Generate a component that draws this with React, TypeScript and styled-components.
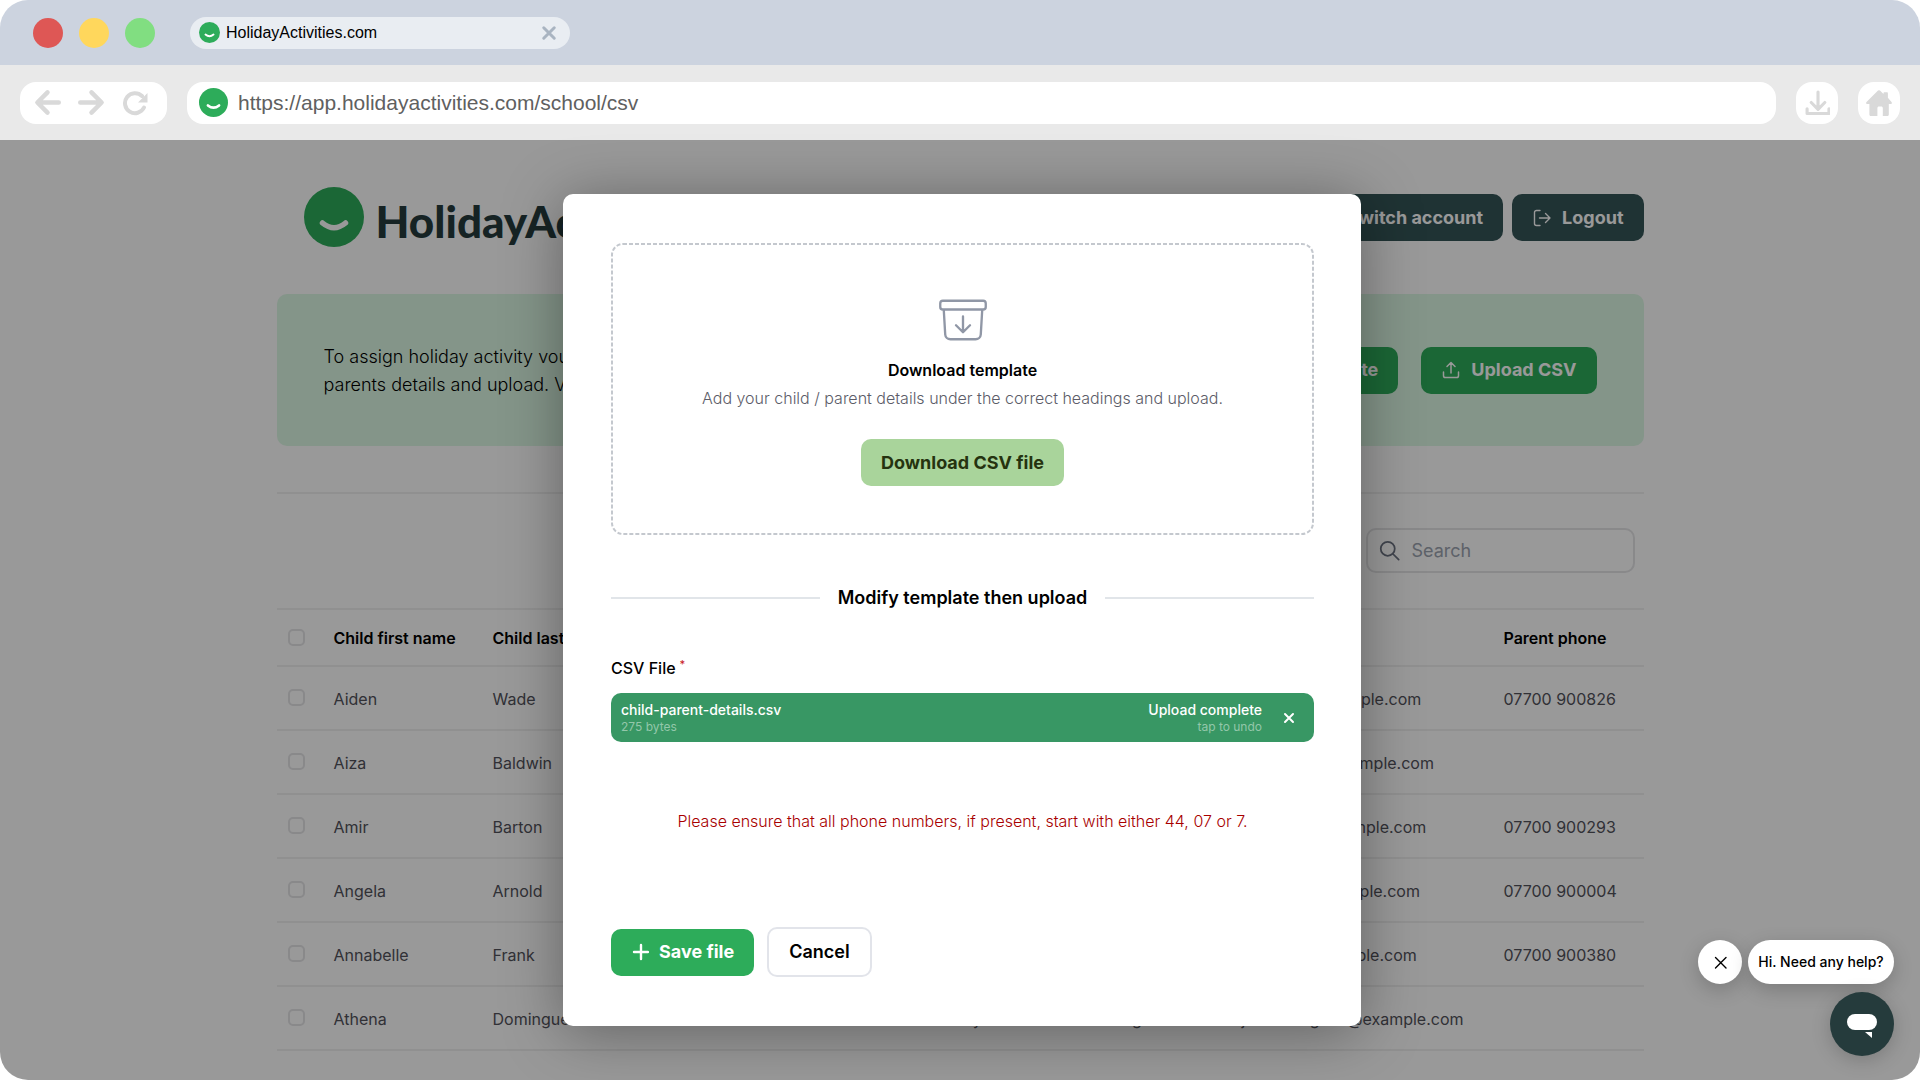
import React from "react";
import styled, { createGlobalStyle, css } from "styled-components";

const GlobalStyle = createGlobalStyle`
  *, *::before, *::after { box-sizing: border-box; }
  body { margin: 0; background: #ffffff; font-family: Inter, "Noto Sans", sans-serif; color: #000000; }
  button, input { font: inherit; color: inherit; }
  button { border: 0; padding: 0; background: none; cursor: pointer; }
`;

/* ---------- browser frame ---------- */

const BrowserWindow = styled.div`
  display: flex;
  flex-direction: column;
  min-height: 100vh;
  border-radius: 28px;
  overflow: hidden;
`;

const TitleBar = styled.div`
  display: flex;
  align-items: center;
  height: 65px;
  padding: 0 33px;
  gap: 35px;
  background: #ccd3df;
`;

const TrafficLights = styled.div`
  display: flex;
  gap: 16px;
`;

const Light = styled.button<{ $color: string }>`
  width: 30px;
  height: 30px;
  border-radius: 50%;
  background: ${(p) => p.$color};
`;

const Tab = styled.div`
  display: flex;
  align-items: center;
  gap: 6px;
  width: 380px;
  height: 32px;
  padding: 0 12px 0 9px;
  border-radius: 16px;
  background: #e9edf2;
  font: 16px/20px "Liberation Sans", Arial, sans-serif;
`;

const TabTitle = styled.span`
  flex: 1;
`;

const TabClose = styled.button`
  display: flex;
  color: #a9b4c1;
`;

const Toolbar = styled.div`
  display: flex;
  align-items: center;
  gap: 20px;
  height: 75px;
  padding: 0 20px;
  background: #e9e9e9;
`;

const ToolGroup = styled.div`
  display: flex;
  align-items: center;
  gap: 17px;
  height: 42px;
  padding: 0 19px 0 14px;
  border-radius: 16px;
  background: #ffffff;
`;

const ToolButton = styled.button<{ $boxed?: boolean }>`
  display: flex;
  align-items: center;
  justify-content: center;
  color: #d9d9d9;
  ${(p) =>
    p.$boxed &&
    css`
      width: 42px;
      height: 42px;
      border-radius: 16px;
      background: #ffffff;
    `}
`;

const AddressBar = styled.div`
  display: flex;
  flex: 1;
  align-items: center;
  gap: 10px;
  height: 42px;
  padding: 0 12px;
  border-radius: 16px;
  background: #ffffff;
`;

const AddressInput = styled.input`
  flex: 1;
  border: 0;
  padding: 0;
  outline: 0;
  background: none;
  color: #606060;
  font: 21px/24px "Liberation Sans", Arial, sans-serif;
`;

/* ---------- page ---------- */

const Viewport = styled.div`
  position: relative;
  display: flex;
  flex: 1;
  flex-direction: column;
  background: #ffffff;
`;

const Page = styled.div`
  width: 100%;
  max-width: 1367px;
  margin: 0 auto;
  padding-top: 47px;
`;

const Header = styled.header`
  display: flex;
  align-items: flex-start;
  justify-content: space-between;
  padding-left: 27px;
  margin-bottom: 47px;
`;

const Brand = styled.a`
  display: flex;
  align-items: center;
  gap: 12px;
  height: 60px;
  color: #253b3d;
  font: 900 44px/56px Lato, sans-serif;
  text-decoration: none;
`;

const BrandName = styled.span`
  padding-top: 8px;
`;

const Row = styled.div<{ $gap: number; $top?: number }>`
  display: flex;
  align-items: center;
  gap: ${(p) => p.$gap}px;
  padding-top: ${(p) => p.$top ?? 0}px;
`;

const tones = {
  dark: css`
    background: #355558;
    color: #ffffff;
  `,
  green: css`
    background: #2dac5a;
    color: #ffffff;
  `,
  lime: css`
    background: #a9d49b;
    color: #25330f;
  `,
  outline: css`
    height: 50px;
    border: 2px solid #e2e4ea;
    background: #ffffff;
    font-weight: 600;
  `,
};

const Button = styled.button<{ $tone: keyof typeof tones }>`
  display: inline-flex;
  align-items: center;
  justify-content: center;
  gap: 10px;
  height: 47px;
  padding: 0 20px;
  border-radius: 10px;
  font-size: 18px;
  font-weight: 700;
  line-height: 24px;
  white-space: nowrap;
  ${(p) => tones[p.$tone]}
`;

const Banner = styled.section`
  display: flex;
  align-items: center;
  justify-content: space-between;
  height: 152px;
  padding: 0 47px;
  border-radius: 10px;
  background: #ddf8e5;
`;

const BannerText = styled.p`
  max-width: 500px;
  margin: 0;
  padding-top: 2px;
  font-size: 18px;
  font-weight: 300;
  line-height: 28px;
`;

const FilterBar = styled.div`
  display: flex;
  justify-content: flex-end;
  align-items: center;
  height: 116px;
  margin-top: 46px;
  padding: 0 9px 2px 0;
  border-top: 2px solid #f0f0f0;
`;

const SearchBox = styled.label`
  display: flex;
  align-items: center;
  gap: 12px;
  width: 269px;
  height: 45px;
  padding: 0 11px;
  border: 2px solid #e4e4e7;
  border-radius: 10px;
  color: #6b7280;
`;

const SearchInput = styled.input`
  flex: 1;
  min-width: 0;
  border: 0;
  padding: 2px 0 0;
  outline: 0;
  background: none;
  font-size: 18px;
  line-height: 24px;
  &::placeholder { color: #9ca3af; opacity: 1; }
`;

const Table = styled.table`
  width: 100%;
  table-layout: fixed;
  border-collapse: collapse;
  border-top: 2px solid #f0f0f0;
  font-size: 16px;
  line-height: 24px;
  text-align: left;
`;

const Col = styled.col<{ $w?: string }>`
  width: ${(p) => p.$w ?? "auto"};
`;

const Tr = styled.tr`
  height: 64px;
  border-bottom: 2px solid #f0f0f0;
  thead & { height: 57px; }
`;

const Th = styled.th`
  padding: 0;
  font-weight: 600;
  white-space: nowrap;
`;

const Td = styled.td`
  padding: 2px 0 0;
  color: #52525b;
  &:first-child { padding: 0 0 2px; }
`;

const Check = styled.input`
  display: block;
  appearance: none;
  width: 17px;
  height: 17px;
  margin: 0 0 0 11px;
  border: 2px solid #e4e4e7;
  border-radius: 5px;
`;

/* ---------- modal ---------- */

const Overlay = styled.div`
  position: absolute;
  inset: 0;
  display: flex;
  align-items: flex-start;
  justify-content: center;
  padding: 54px 0 54px 4px;
  background: rgba(0, 0, 0, 0.4);
`;

const Modal = styled.form`
  display: flex;
  flex-direction: column;
  width: 798px;
  max-width: 100%;
  height: 100%;
  padding: 49px 47px 49px 48px;
  border-radius: 10px;
  background: #ffffff;
  box-shadow: 0 6px 60px rgba(0, 0, 0, 0.36);
`;

const TemplateBox = styled.section`
  position: relative;
  display: flex;
  flex-direction: column;
  align-items: center;
  padding: 49px 0;
`;

const DashedOutline = styled.svg`
  position: absolute;
  inset: 0;
  width: 100%;
  height: 100%;
  pointer-events: none;
  rect {
    width: calc(100% - 2px);
    height: calc(100% - 2px);
  }
`;

const BoxTitle = styled.h2`
  margin: 10px 0 4px;
  font-size: 16px;
  font-weight: 600;
  line-height: 24px;
`;

const BoxText = styled.p`
  margin: 0 0 29px;
  color: #5c5c68;
  font-size: 16px;
  font-weight: 300;
  line-height: 24px;
`;

const Divider = styled.div`
  display: flex;
  align-items: center;
  gap: 18px;
  margin: 51px 0 46px;
  font-size: 18px;
  font-weight: 600;
  line-height: 24px;
  &::before, &::after {
    content: "";
    flex: 1;
    height: 2px;
    background: #e1e5e9;
  }
`;

const FieldLabel = styled.label`
  display: flex;
  gap: 4px;
  margin-bottom: 13px;
  font-size: 16px;
  font-weight: 500;
  line-height: 24px;
`;

const Required = styled.span`
  color: #c81e1e;
  font-size: 11px;
  line-height: 16px;
`;

const HiddenFile = styled.input`
  position: absolute;
  width: 1px;
  height: 1px;
  opacity: 0;
`;

const UploadedFile = styled.div`
  display: flex;
  flex-shrink: 0;
  align-items: center;
  height: 49px;
  padding: 0 18px 0 10px;
  border-radius: 10px;
  background: #389764;
  color: #ffffff;
`;

const FileInfo = styled.div<{ $end?: boolean }>`
  display: flex;
  flex: 1;
  flex-direction: column;
  text-align: ${(p) => (p.$end ? "right" : "left")};
  font-size: 14px;
  font-weight: 500;
  line-height: 18px;
`;

const FileMeta = styled.small`
  color: #93c7aa;
  font-size: 12px;
  font-weight: 400;
  line-height: 16px;
`;

const RemoveFile = styled.button`
  display: flex;
  margin-left: 20px;
`;

const ErrorText = styled.p`
  margin: 67px 0 0;
  color: #a80000;
  font-size: 16px;
  font-weight: 300;
  line-height: 24px;
  text-align: center;
`;

/* ---------- help widget ---------- */

const Help = styled.aside`
  position: absolute;
  right: 26px;
  bottom: 24px;
  display: flex;
  flex-direction: column;
  align-items: flex-end;
  gap: 8px;
`;

const Bubble = styled.button<{ $round?: boolean }>`
  display: flex;
  align-items: center;
  justify-content: center;
  width: ${(p) => (p.$round ? "44px" : "146px")};
  height: 44px;
  border-radius: 22px;
  background: #ffffff;
  box-shadow: 0 6px 20px rgba(0, 0, 0, 0.2);
  font-size: 14px;
  font-weight: 500;
  line-height: 20px;
`;

const ChatButton = styled.button`
  display: flex;
  align-items: center;
  justify-content: center;
  width: 64px;
  height: 64px;
  border-radius: 50%;
  background: #253b3c;
  box-shadow: 0 4px 20px rgba(0, 0, 0, 0.2);
`;

/* ---------- drawings ---------- */

const Smile = ({ size }: { size: number }) => (
  <svg width={size} height={size} viewBox="0 0 60 60" aria-hidden="true">
    <circle cx="30" cy="30" r="30" fill="#2dac5a" />
    <path d="M18.500 36Q30 45.500 41.500 36" fill="none" stroke="#fff" strokeWidth="5.500" strokeLinecap="round" />
  </svg>
);

const Stroke = ({ size, width, box = 24, children }: { size: number; width: number; box?: number; children: React.ReactNode }) => (
  <svg
    width={size}
    height={size}
    viewBox={`0 0 ${box} ${box}`}
    fill="none"
    stroke="currentColor"
    strokeWidth={width}
    strokeLinecap="round"
    strokeLinejoin="round"
    aria-hidden="true"
  >
    {children}
  </svg>
);

/* ---------- data ---------- */

const families = [
  ["Aiden", "Wade", "", "", "", "sa.wade@example.com", "07700 900826"],
  ["Aiza", "Baldwin", "", "", "", "sl.baldwin@example.com", ""],
  ["Amir", "Barton", "", "", "", "te.barton@example.com", "07700 900293"],
  ["Angela", "Arnold", "", "", "", "lt.arnold@example.com", "07700 900004"],
  ["Annabelle", "Frank", "", "", "", "ra.frank@example.com", "07700 900380"],
  ["Athena", "Dominguez", "", "Jeremy", "Dominguez", "jezdominguez@example.com", ""],
];

const headings = [
  "Child first name",
  "Child last name",
  "",
  "Parent first name",
  "Parent last name",
  "Parent email",
  "Parent phone",
];

export default function App() {
  return (
    <>
      <GlobalStyle />
      <BrowserWindow>
        <TitleBar>
          <TrafficLights>
            <Light $color="#de5755" aria-label="Close window" />
            <Light $color="#ffd75c" aria-label="Minimise window" />
            <Light $color="#81de81" aria-label="Maximise window" />
          </TrafficLights>
          <Tab>
            <Smile size={21} />
            <TabTitle>HolidayActivities.com</TabTitle>
            <TabClose aria-label="Close tab">
              <Stroke size={18} width={4}>
                <path d="M5 5 19 19M19 5 5 19" />
              </Stroke>
            </TabClose>
          </Tab>
        </TitleBar>
        <Toolbar>
          <ToolGroup>
            <ToolButton aria-label="Back">
              <Stroke size={27} width={4}>
                <path d="M12 3 3 12l9 9M4 12h18" />
              </Stroke>
            </ToolButton>
            <ToolButton aria-label="Forward">
              <Stroke size={27} width={4}>
                <path d="m12 3 9 9-9 9M20 12H2" />
              </Stroke>
            </ToolButton>
            <ToolButton aria-label="Reload">
              <svg width="26" height="26" viewBox="0 0 26 26" fill="none" aria-hidden="true">
                <path d="M22 17.500A10 10 0 1 1 20 6" stroke="currentColor" strokeWidth="4" strokeLinecap="round" />
                <path d="M25.500 3v9.500H16z" fill="currentColor" />
              </svg>
            </ToolButton>
          </ToolGroup>
          <AddressBar>
            <Smile size={29} />
            <AddressInput aria-label="Address" defaultValue="https://app.holidayactivities.com/school/csv" />
          </AddressBar>
          <ToolButton $boxed aria-label="Downloads">
            <Stroke size={25} width={3}>
              <path d="M12.500 2v15M6 12l6.500 6.500L19 12M2 18v4.500h21V18" />
            </Stroke>
          </ToolButton>
          <ToolButton $boxed aria-label="Home">
            <svg width="26" height="26" viewBox="0 0 26 26" fill="currentColor" aria-hidden="true">
              <path d="M12 .6a1.500 1.500 0 0 1 2 0l3.500 3.300V3.200c0-.6.4-1 1-1h2.400c.6 0 1 .4 1 1v4.500l3.600 4.200c.8 1 .3 2.100-.9 2.100h-1.800v10.500c0 .8-.5 1.500-1.300 1.500h-4.700V18c0-.9-.6-1.500-1.500-1.500h-2.400c-.9 0-1.500.6-1.500 1.500v8H4.800c-.8 0-1.400-.7-1.400-1.500V14H1.400c-1.200 0-1.700-1.100-.9-2.100z" />
            </svg>
          </ToolButton>
        </Toolbar>

        <Viewport>
          <Page>
            <Header>
              <Brand href="#">
                <Smile size={60} />
                <BrandName>HolidayActivities</BrandName>
              </Brand>
              <Row $gap={9} $top={7}>
                <Button $tone="dark">Switch account</Button>
                <Button $tone="dark">
                  <Stroke size={20} width={1.4} box={20}>
                    <path d="M8 2.500H4.500a2 2 0 0 0-2 2v11a2 2 0 0 0 2 2H8M7.500 10H18M13.500 5.500 18 10l-4.500 4.500" />
                  </Stroke>
                  Logout
                </Button>
              </Row>
            </Header>

            <Banner>
              <BannerText>
                To assign holiday activity vouchers, fill in the child and parents details and upload. View help.
              </BannerText>
              <Row $gap={23}>
                <Button $tone="green">Download template</Button>
                <Button $tone="green">
                  <Stroke size={20} width={1.5} box={20}>
                    <path d="M10 13V2.500M6 6.500l4-4 4 4M2.500 12v3.700a1.800 1.800 0 0 0 1.800 1.800h11.400a1.800 1.800 0 0 0 1.800-1.800V12" />
                  </Stroke>
                  Upload CSV
                </Button>
              </Row>
            </Banner>

            <FilterBar>
              <SearchBox>
                <Stroke size={21} width={2}>
                  <circle cx="10" cy="10" r="8" />
                  <path d="m16 16 6.500 6.500" />
                </Stroke>
                <SearchInput type="search" placeholder="Search" aria-label="Search children" />
              </SearchBox>
            </FilterBar>

            <Table>
              <colgroup>
                <Col $w="57px" />
                <Col $w="159px" />
                <Col $w="158px" />
                <Col />
                <Col $w="158px" />
                <Col $w="158px" />
                <Col $w="262px" />
                <Col $w="140px" />
              </colgroup>
              <thead>
                <Tr>
                  <Th>
                    <Check type="checkbox" aria-label="Select all" />
                  </Th>
                  {headings.map((h, i) => (
                    <Th key={i} scope="col">
                      {h}
                    </Th>
                  ))}
                </Tr>
              </thead>
              <tbody>
                {families.map((cells) => (
                  <Tr key={cells[0]}>
                    <Td>
                      <Check type="checkbox" aria-label={`Select ${cells[0]}`} />
                    </Td>
                    {cells.map((c, i) => (
                      <Td key={i}>{c}</Td>
                    ))}
                  </Tr>
                ))}
              </tbody>
            </Table>
          </Page>

          <Overlay>
            <Modal role="dialog" aria-label="Upload CSV" onSubmit={(e) => e.preventDefault()}>
              <TemplateBox>
                <DashedOutline aria-hidden="true">
                  <rect x="1" y="1" rx="11" fill="none" stroke="#c4c8ce" strokeWidth="2" strokeDasharray="4 2" />
                </DashedOutline>
                <Stroke size={56} width={1}>
                  <path d="m20.250 7.500-.625 10.632a2.250 2.250 0 0 1-2.247 2.118H6.622a2.250 2.250 0 0 1-2.247-2.118L3.750 7.500m8.250 3v6.750m0 0-3-3m3 3 3-3M3.375 7.500h17.250c.621 0 1.125-.504 1.125-1.125v-1.500c0-.621-.504-1.125-1.125-1.125H3.375c-.621 0-1.125.504-1.125 1.125v1.500c0 .621.504 1.125 1.125 1.125Z" stroke="#9097a6" />
                </Stroke>
                <BoxTitle>Download template</BoxTitle>
                <BoxText>Add your child / parent details under the correct headings and upload.</BoxText>
                <Button type="button" $tone="lime">
                  Download CSV file
                </Button>
              </TemplateBox>
              <Divider>Modify template then upload</Divider>
              <FieldLabel htmlFor="csv-file">
                CSV File <Required>*</Required>
              </FieldLabel>
              <HiddenFile id="csv-file" type="file" accept=".csv" />
              <UploadedFile>
                <FileInfo>
                  child-parent-details.csv
                  <FileMeta>275 bytes</FileMeta>
                </FileInfo>
                <FileInfo $end>
                  Upload complete
                  <FileMeta>tap to undo</FileMeta>
                </FileInfo>
                <RemoveFile type="button" aria-label="Remove file">
                  <Stroke size={14} width={2} box={14}>
                    <path d="m3 3 8 8M11 3l-8 8" />
                  </Stroke>
                </RemoveFile>
              </UploadedFile>
              <ErrorText role="alert">
                Please ensure that all phone numbers, if present, start with either 44, 07 or 7.
              </ErrorText>
              <Row $gap={13} $top={94}>
                <Button $tone="green">
                  <Stroke size={18} width={2.4} box={18}>
                    <path d="M10 2v14M3 9h14" />
                  </Stroke>
                  Save file
                </Button>
                <Button type="button" $tone="outline">
                  Cancel
                </Button>
              </Row>
            </Modal>
          </Overlay>

          <Help>
            <Row $gap={6}>
              <Bubble $round aria-label="Dismiss">
                <Stroke size={14} width={1.4} box={14}>
                  <path d="m2.500 2.500 10.500 10.500M13 2.500 2.500 13" />
                </Stroke>
              </Bubble>
              <Bubble>Hi. Need any help?</Bubble>
            </Row>
            <ChatButton aria-label="Open chat">
              <svg width="32" height="28" viewBox="0 0 32 28" fill="#ffffff" aria-hidden="true">
                <rect x="1" y="4" width="30" height="16" rx="8" />
                <path d="M19 22h7v6z" />
              </svg>
            </ChatButton>
          </Help>
        </Viewport>
      </BrowserWindow>
    </>
  );
}
